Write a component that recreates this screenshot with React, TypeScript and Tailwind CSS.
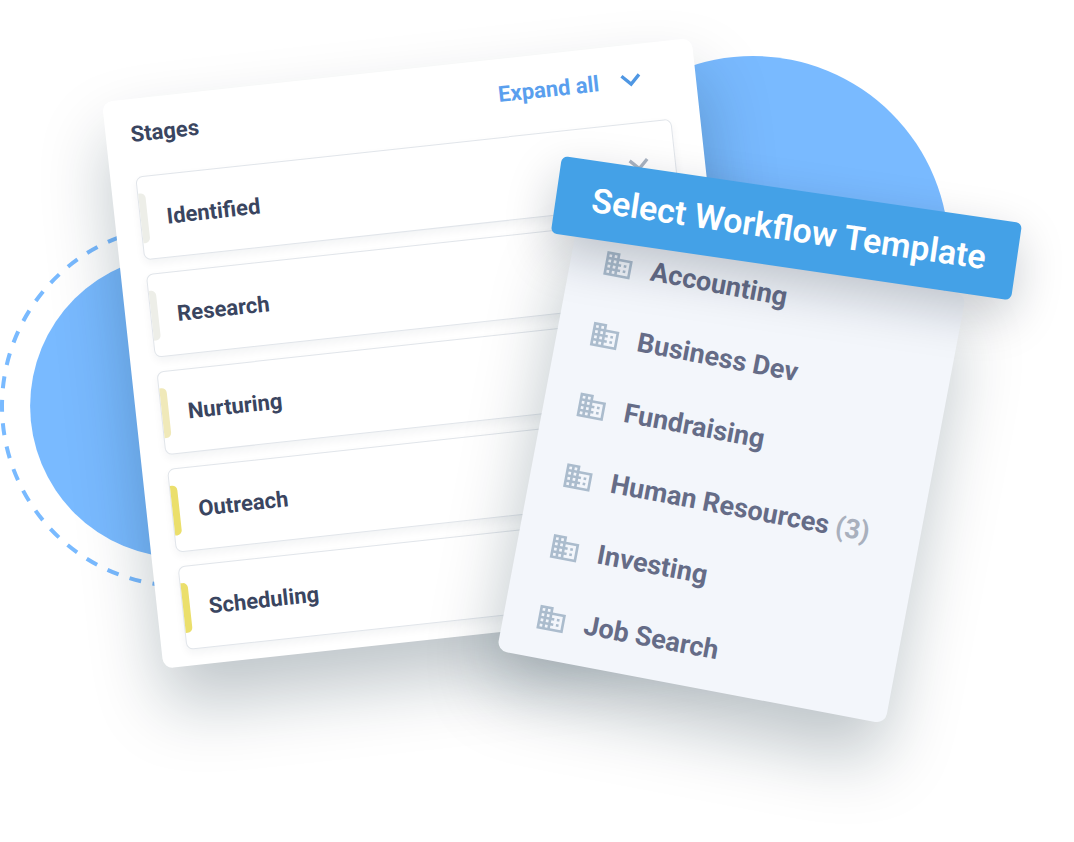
import { MdDomain, MdExpandMore } from "react-icons/md";

const stages = [
  { name: "Identified", bar: "bg-[#edeee8]" },
  { name: "Research", bar: "bg-[#edeee8]" },
  { name: "Nurturing", bar: "bg-[#f0e9b9]" },
  { name: "Outreach", bar: "bg-[#ebdf6c]" },
  { name: "Scheduling", bar: "bg-[#ebdf6c]" },
];

const templates: { name: string; count?: number }[] = [
  { name: "Accounting" },
  { name: "Business Dev" },
  { name: "Fundraising" },
  { name: "Human Resources", count: 3 },
  { name: "Investing" },
  { name: "Job Search" },
];

function Backdrop() {
  return (
    <svg
      className="absolute top-0 left-0"
      width="1074"
      height="842"
      viewBox="0 0 1074 842"
      fill="none"
      aria-hidden="true"
    >
      <circle cx="753" cy="252" r="196" fill="#79baff" />
      <circle cx="181.7" cy="406" r="151.6" fill="#79baff" />
      <circle
        cx="182"
        cy="406"
        r="180"
        stroke="#79baff"
        strokeWidth="4"
        strokeDasharray="12 11.562"
        strokeDashoffset="6"
      />
    </svg>
  );
}

function StageRow({ name, bar }: { name: string; bar: string }) {
  return (
    <li>
      <button
        type="button"
        aria-expanded="false"
        className="flex h-[84px] w-full items-center rounded-[7px] border border-[#e1e5ea] bg-white pr-4 text-left shadow-[0_4px_8px_rgba(20,35,50,0.05)]"
      >
        <span className={`h-[50px] w-[7px] rounded-r-[5px] ${bar}`} />
        <span className="ml-[19px] flex-1 text-[22px] font-bold">{name}</span>
        <MdExpandMore className="size-10 text-[#a9b4c2]" />
      </button>
    </li>
  );
}

function StagesPanel() {
  return (
    <section className="absolute top-[102px] left-[102px] w-[593px] origin-top-left rotate-[-6.2deg] rounded-[10px] bg-white pr-[29px] pb-4 pl-[25px] text-[#3a4560] shadow-[0_38px_68px_rgba(8,34,50,0.26)]">
      <header className="flex h-[78px] items-center justify-between pr-4 pb-2">
        <h2 className="text-[22px] font-bold">Stages</h2>
        <button
          type="button"
          className="flex items-center gap-3 text-[22px] font-bold text-[#5a9fee]"
        >
          Expand all
          <MdExpandMore className="size-10 text-[#4f97e3]" />
        </button>
      </header>
      <ul className="flex flex-col gap-[14px]">
        {stages.map((s) => (
          <StageRow key={s.name} {...s} />
        ))}
      </ul>
    </section>
  );
}

function TemplatesPanel() {
  return (
    <section className="absolute top-[221px] left-[578px] h-[437px] w-[395px] origin-top-left rotate-[10.7deg] rounded-[10px] bg-[#f3f6fb] px-8 pt-[18px] shadow-[0_38px_68px_rgba(8,34,50,0.26)]">
      <ul className="flex flex-col gap-9">
        {templates.map(({ name, count }) => (
          <li key={name}>
            <button
              type="button"
              className="flex h-9 items-center gap-[17px] text-[27px] font-bold whitespace-nowrap text-[#656c87]"
            >
              <MdDomain className="size-8 text-[#abbccd]" />
              <span>
                {name}
                {count !== undefined && (
                  <span className="text-[#a9b0bd]"> ({count})</span>
                )}
              </span>
            </button>
          </li>
        ))}
      </ul>
    </section>
  );
}

function Banner() {
  return (
    <h1 className="absolute top-[156px] left-[562px] flex h-[78px] w-[465px] origin-top-left rotate-[8.3deg] items-center rounded-[6px] bg-[#44a1e7] pl-9 text-[34px] font-semibold whitespace-nowrap text-white shadow-[0_18px_48px_rgba(8,24,40,0.22)]">
      Select Workflow Template
    </h1>
  );
}

export default function App() {
  return (
    <main className="relative min-h-screen w-full overflow-hidden bg-white font-[Roboto,sans-serif]">
      <Backdrop />
      <StagesPanel />
      <TemplatesPanel />
      <Banner />
    </main>
  );
}
